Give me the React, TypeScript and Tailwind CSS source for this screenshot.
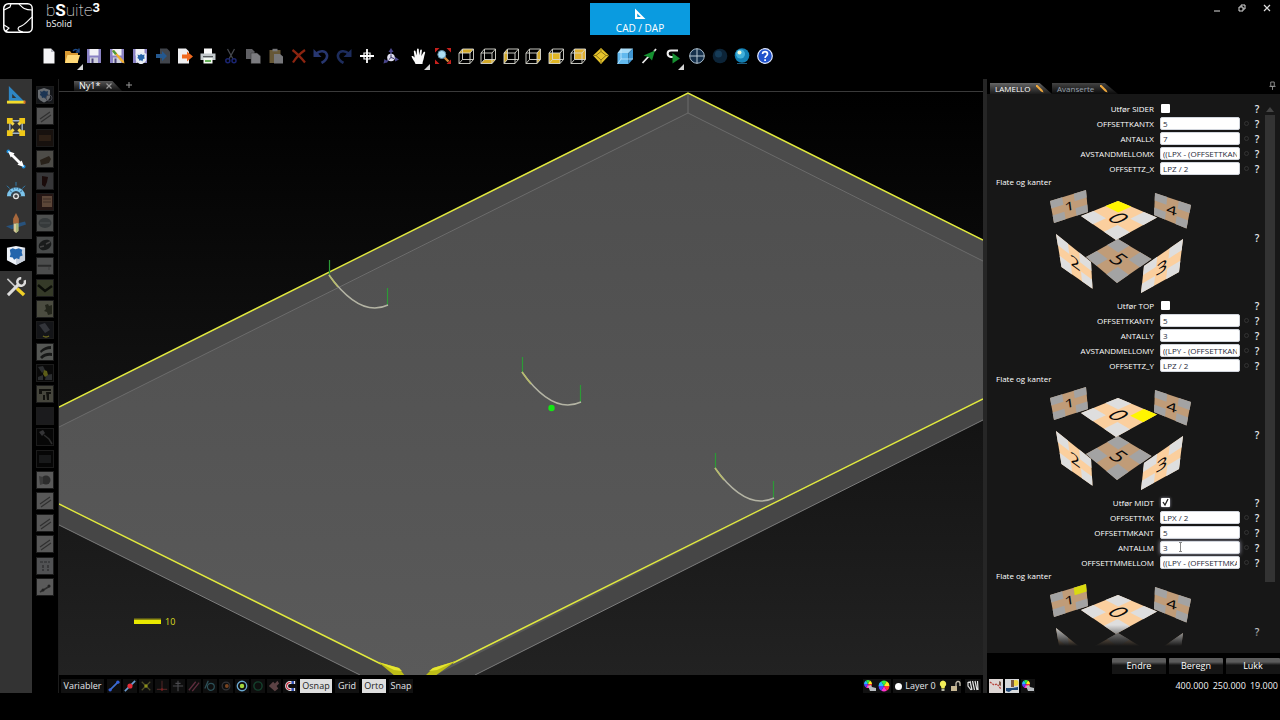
import React, { useState } from "react";

type IconName = string;

function cube(face: React.ReactNode) {
  return (
    <>
      {face}
      <path d="M1 5h11v10.500H1zM4.500 1H15.500v10.500H4.500zM1 5l3.500-4M12 5l3.500-4M12 15.500l3.500-4M1 15.500l3.500-4" fill="none" stroke="#d8d8d0" strokeWidth="0.9" />
    </>
  );
}

const floppy = (
  <>
    <path d="M1 1h14v14H1z" fill="#8a82c4" />
    <path d="M3.500 1h9v6.500h-9z" fill="#f2f2f6" />
    <path d="M4 9.500h8V15H4z" fill="#cfd0dc" />
    <path d="M5.500 10.500h2V15h-2z" fill="#4a4478" />
  </>
);

const shield = (
  <>
    <path d="M2 3l6-2 6 2v7c0 2-3 4-6 5.500C5 14 2 12 2 10z" fill="#e8edf4" />
    <path d="M4 4l2 .8L8 3.500l2 1 2-.4-.4 2.500.6 1.800-1.800.8L9.500 12 8 10.500 6 11 5.500 9 3.800 8l.8-1.800z" fill="#2763a8" />
  </>
);

const ICONS: Record<IconName, React.ReactNode> = {
  new: (
    <>
      <path d="M2.500 0.500h7.500l3.500 3.500v11.500h-11z" fill="#f4f4f6" />
      <path d="M10 .5V4h3.500z" fill="#b4b6c0" />
    </>
  ),
  open: (
    <>
      <path d="M1 3h5l1.500 2H14v10H1z" fill="#d99a32" />
      <path d="M3.500 7H16l-2.500 8H1z" fill="#ffd978" />
      <path d="M9 3c1.500-2 4-2 5.500 0M15 .5V4h-3.200" fill="none" stroke="#1f4a86" strokeWidth="1.400" />
    </>
  ),
  save: floppy,
  saveAs: (
    <>
      {floppy}
      <path d="M3 3l2-1 10 11 .5 2.500-2.500-1z" fill="#f0b030" />
      <path d="M3 3l2-1 3 3.500-2 1.500z" fill="#4a9a3c" />
    </>
  ),
  saveShield: (
    <>
      {floppy}
      <g transform="translate(2 3) scale(0.880)">{shield}</g>
    </>
  ),
  importDoc: (
    <>
      <path d="M5 .5h7l3 3v12H5z" fill="#41454c" />
      <path d="M1 6h6V3l5 5-5 5v-3H1z" fill="#24588f" />
    </>
  ),
  exportDoc: (
    <>
      <path d="M1 .5h8l3 3v12H1z" fill="#f0f0f2" />
      <path d="M5 6.500h5V3.500l6 5-6 5v-3H5z" fill="#f06a20" />
    </>
  ),
  print: (
    <>
      <path d="M4 .5h8V6H4z" fill="#fafafa" />
      <path d="M.5 5.500h15v6.500H.5z" fill="#c3c9cc" />
      <path d="M3 8h10v1.200H3z" fill="#54595c" />
      <path d="M3.500 10h9v5.500h-9z" fill="#f4faf2" />
      <path d="M5 12h6v2H5z" fill="#69b45c" />
    </>
  ),
  cut: (
    <>
      <path d="M4.500 1l5.500 10M11.500 1L6 11" stroke="#45484e" strokeWidth="1.300" />
      <circle cx="4.800" cy="12.800" r="2" fill="none" stroke="#1a2470" strokeWidth="1.500" />
      <circle cx="11" cy="12.800" r="2" fill="none" stroke="#1a2470" strokeWidth="1.500" />
    </>
  ),
  copy: (
    <>
      <path d="M1 1h6l2.500 2.500V11H1z" fill="#606064" />
      <path d="M6 5h6l3.500 3v7.500H6z" fill="#7c7c80" stroke="#333" strokeWidth="0.500" />
    </>
  ),
  paste: (
    <>
      <path d="M1.500 2h11v13h-11z" fill="#665736" />
      <path d="M4.500 .8h5v2.500h-5z" fill="#77777a" />
      <path d="M6 6h6l3 2.500v7H6z" fill="#77777a" />
    </>
  ),
  del: <path d="M1.500 2c4 3 8 7 12.500 12.500M14 2C9 5.500 5 9.500 2 14.500" fill="none" stroke="#8c2410" strokeWidth="2.200" />,
  undo: (
    <>
      <path d="M3.500 5.500C7 2 13 2.500 14 7c.6 3.500-2 6-5.500 8" fill="none" stroke="#27366f" strokeWidth="2.600" />
      <path d="M.5 1v8h8z" fill="#27366f" />
    </>
  ),
  redo: (
    <>
      <path d="M12.500 5.500C9 2 3 2.500 2 7c-.6 3.500 2 6 5.500 8" fill="none" stroke="#1d2c5c" strokeWidth="2.600" />
      <path d="M15.500 1v8h-8z" fill="#1d2c5c" />
    </>
  ),
  target: (
    <>
      <path d="M8 1v14M1 8h14" stroke="#fff" strokeWidth="1.800" />
      <path d="M5 5h6v6H5z" fill="none" stroke="#fff" strokeWidth="1.200" />
    </>
  ),
  axes: (
    <>
      <path d="M8 9V3M8 9l6 2M8 9l-5 5" stroke="#4a468c" strokeWidth="1.500" />
      <path d="M8 0l2.500 4h-5zM16 11.500l-4 2v-4.500zM.5 15.500l1-4.500 3.500 3z" fill="#4a468c" />
      <circle cx="8" cy="9.500" r="3.800" fill="#e0dff0" />
      <path d="M8 9.500V6.500M8 9.500l3 1M8 9.500l-2.200 2.200" stroke="#333060" strokeWidth="1" />
    </>
  ),
  hand: (
    <path
      d="M4.500 16C3.500 13 1 10.500.5 8.500c.8-1 2-.3 3.200 1.200L2.800 3.500c0-1.300 1.500-1.400 1.800-.1l1 4L6 1.500C6.100.2 7.700.2 7.800 1.500l.3 5.700 1.100-5c.3-1.200 1.800-.9 1.700.4L10.300 8l2.200-3.700c.7-1 2-.4 1.600.8-.8 2.400-1 4.400-1.600 6.400-.4 1.500-1 2.500-1 4.500z"
      fill="#fafafa"
    />
  ),
  zoomAll: (
    <>
      <path d="M0 0h4.500L0 4.500zM16 0h-4.500L16 4.500zM0 16h4.500L0 11.500zM16 16h-4.500l4.500-4.500z" fill="#c8201c" />
      <path d="M9 9l4.500 4.500" stroke="#d08a3c" strokeWidth="2.400" />
      <circle cx="6.800" cy="6.500" r="4" fill="#aee0f4" stroke="#5f8ea8" strokeWidth="1" />
    </>
  ),
  cTop: cube(<path d="M1 5l3.500-4h11L12 5z" fill="#d3a928" />),
  cBottom: cube(<path d="M1 15.500l3.500-4h11l-3.500 4z" fill="#d3a928" />),
  cLeft: cube(<path d="M1 5l3.500-4v10.500l-3.500 4z" fill="#d3a928" />),
  cRight: cube(<path d="M12 5l3.500-4v10.500l-3.500 4z" fill="#d3a928" />),
  cFront: cube(<path d="M1 5h11v10.500H1z" fill="#e0b624" />),
  cBack: cube(<path d="M4.500 1h11v10.500h-11z" fill="#e0b030" />),
  iso: (
    <>
      <path d="M8 0l8 7.500L8 16 0 7.500z" fill="#e6c42c" />
      <path d="M8 3.500l5 4-5 4.500-5-4.500zM8 3.500V0M13 7.500h3M8 12v4M3 7.500H0" fill="none" stroke="#8c7414" strokeWidth="1" />
    </>
  ),
  cubeBlue: (
    <>
      <path d="M.5 5h11v11H.5z" fill="#62b9ee" />
      <path d="M.5 5L4 .5h12L11.500 5z" fill="#a8dcf8" />
      <path d="M11.500 5L16 .5V11l-4.500 5z" fill="#3f96d2" />
      <path d="M4 .5V11h12M4 11L.5 16" fill="none" stroke="#d6f0ff" strokeWidth="0.700" />
    </>
  ),
  arrowGreen: (
    <>
      <path d="M1.500 15L8 8M13 3.500l2-2.500" stroke="#e8e8e8" strokeWidth="1.800" />
      <path d="M14 2.500l-3 10-3-3.300L2.500 7.500z" fill="#159030" />
    </>
  ),
  turn: (
    <>
      <path d="M13 2.500H6C1.500 2.500 1.500 8.500 6 9h2" fill="none" stroke="#f0f0f0" strokeWidth="2" />
      <path d="M7.500 5l7.500 5.500-7.500 5z" fill="#159030" />
    </>
  ),
  globeWire: (
    <>
      <circle cx="8" cy="8" r="7.300" fill="#15304c" stroke="#a8bccc" strokeWidth="1" />
      <path d="M8 .5v15M.5 8h15" stroke="#b8c8d4" strokeWidth="1" />
    </>
  ),
  globeDark: (
    <>
      <circle cx="8" cy="8" r="7.300" fill="#0c2438" />
      <circle cx="6.500" cy="6" r="3.500" fill="#163c58" />
    </>
  ),
  globe: (
    <>
      <circle cx="8" cy="7.500" r="7.300" fill="#1380b4" />
      <circle cx="6.500" cy="6" r="4.500" fill="#40b0dc" />
      <circle cx="5.500" cy="4.500" r="2" fill="#eef8d8" />
      <path d="M3 15.500h10" stroke="#1d5a7c" />
    </>
  ),
  help: (
    <>
      <circle cx="8" cy="8" r="7.300" fill="#2052cc" stroke="#dfe8ff" strokeWidth="1.200" />
      <path d="M5.500 6c0-3.300 5-3.300 5 0 0 2-2.400 1.800-2.400 4M8.100 11.300v1.800" fill="none" stroke="#fff" strokeWidth="1.700" />
    </>
  ),
};

function Ico({ name }: { name: IconName }) {
  return (
    <svg viewBox="0 0 16 16" className="size-4" aria-hidden="true">
      {ICONS[name]}
    </svg>
  );
}

function ToolButton({ name, menu }: { name: IconName; menu?: boolean }) {
  return (
    <button type="button" aria-label={name} className="relative flex h-6 w-5 items-center justify-center">
      <Ico name={name} />
      {menu && (
        <svg viewBox="0 0 6 6" className="absolute -right-px -bottom-0.5 size-[6px]" aria-hidden="true">
          <path d="M6 0v6H0z" fill="#d4d4d4" />
        </svg>
      )}
    </button>
  );
}

const MENUS = ["open", "hand", "turn"];

function ToolGroup({ names, width }: { names: IconName[]; width: string }) {
  return (
    <div className={`flex shrink-0 justify-between ${width}`}>
      {names.map((n) => (
        <ToolButton key={n} name={n} menu={MENUS.includes(n)} />
      ))}
    </div>
  );
}

const LEFT_TOOLS: { label: string; art: React.ReactNode }[] = [
  {
    label: "Draw",
    art: (
      <>
        <path d="M3 1v16h16zM6.500 9.500v4.200h4.300z" fill="#2e86c4" fillRule="evenodd" />
        <path d="M1 16.500h19v3H1z" fill="#f4dc2c" />
        <path d="M18.500 16.500h2v3h-2z" fill="#d86c28" />
      </>
    ),
  },
  {
    label: "Edit points",
    art: (
      <>
        <path d="M4 4h13v13H4z" fill="none" stroke="#9fb4cc" strokeWidth="1.500" />
        <path d="M1 1h6v6H1zM14 1h6v6h-6zM1 14h6v6H1zM14 14h6v6h-6z" fill="#f0c818" />
        <path d="M6 6l2 2M15 6l-2 2M6 15l2-2M15 15l-2-2" stroke="#f4d84c" strokeWidth="3" />
      </>
    ),
  },
  {
    label: "Measure",
    art: (
      <>
        <circle cx="2.500" cy="2.500" r="2" fill="#1d8cd8" />
        <circle cx="18.500" cy="18.500" r="2" fill="#1d8cd8" />
        <path d="M5 5l11 11" stroke="#fff" strokeWidth="3" />
        <path d="M2 2l7 2.500L5 9zM19 19l-7-2.500 4.500-4.500z" fill="#fff" />
      </>
    ),
  },
  {
    label: "Angle",
    art: (
      <>
        <path d="M1 16a9.500 9.500 0 0119 0z" fill="#7cc4ec" />
        <path d="M5 16a5.500 5.500 0 0111 0z" fill="#35444e" />
        <path d="M4 10l2 1.500M7 7l1 2M10.500 6v2M14 7l-1 2M17 10l-2 1.500" stroke="#28567a" />
        <path d="M10.500 1v4M1 5l3 3M20 5l-3 3" stroke="#2f7fb4" />
        <circle cx="10.500" cy="16" r="2.500" fill="#444" stroke="#e8e8e8" strokeWidth="1.300" />
      </>
    ),
  },
  {
    label: "Tools",
    art: (
      <>
        <path d="M0 14l20-5 1 3-15 5z" fill="#28527c" />
        <path d="M10.500 0l3 6v5h-6V6z" fill="#a8683c" />
        <path d="M8 11h5v8l-2.500 2L8 19z" fill="#d8c898" />
        <path d="M10.500 11h2.500v8l-2.500 2z" fill="#a8b878" />
      </>
    ),
  },
  {
    label: "Macros",
    art: (
      <>
        <path d="M1 3l9.500-2L20 3v13l-9.500 5L1 16z" fill="#eef2f8" />
        <path d="M10.500 8L20 3v13l-9.500 5z" fill="#c8d0dc" />
        <path d="M4 5l3-1.500 3 1 3.500-1L17 5l-.5 3 1 3-3 1-.5 3-3-1-2.500 1.500L7 13l-3-.5.800-3z" fill="#2365ac" />
      </>
    ),
  },
  {
    label: "Settings",
    art: (
      <>
        <path d="M1.500 2L12 12.500" stroke="#c8c8c8" strokeWidth="1.600" />
        <path d="M11.500 12l7.500 7" stroke="#f0d028" strokeWidth="3.600" />
        <path d="M2 19L14 7" stroke="#dcdcdc" strokeWidth="3.200" />
        <path d="M19.500 3.500A4 4 0 1116 1.200" fill="none" stroke="#dcdcdc" strokeWidth="2.600" />
      </>
    ),
  },
];

const pencilMarks = <path d="M3 11L13 4M4 14L14 7" stroke="#303030" strokeWidth="1.200" />;

const MACROS: { bg: string; art: React.ReactNode }[] = [
  { bg: "#15171a", art: <g opacity="0.400"><g transform="translate(-1 0)">{shield}</g><circle cx="12" cy="11" r="3" fill="none" stroke="#889" /></g> },
  { bg: "#545454", art: pencilMarks },
  { bg: "#17110e", art: <path d="M2 5h12v6H2z" fill="#2c1f15" /> },
  { bg: "#4d4c48", art: <path d="M3 9l9-4 2 3-2 4-8 2z" fill="#29221a" /> },
  { bg: "#363638", art: <path d="M5 3l6 1-1 5-2 5-3-2z" fill="#1a0b0a" /> },
  { bg: "#241614", art: <><path d="M5 2h10v11H5z" fill="#5c4638" /><path d="M6 5h8M6 8h8" stroke="#3c2c24" /></> },
  { bg: "#4e504f", art: <><ellipse cx="8" cy="8" rx="6.500" ry="5" fill="#363a3b" /><path d="M3 8h10" stroke="#4b4f50" /></> },
  { bg: "#484a4a", art: <><ellipse cx="8" cy="8" rx="6.500" ry="5" transform="rotate(-25 8 8)" fill="#191b1b" /><path d="M3 10l4-1M9 7l4-2" stroke="#444" strokeWidth="1.500" /></> },
  { bg: "#4c4d4d", art: <path d="M1 7h13v1.500H1zM12 9v3" fill="#2a2b2b" stroke="#2a2b2b" strokeWidth="0.500" /> },
  { bg: "#353a28", art: <path d="M1 5l7 6 7-5" fill="none" stroke="#0b0d08" strokeWidth="2.500" /> },
  { bg: "#4b4c40", art: <path d="M8 4l3-1 1 2 3-1v9l-4 1-1-3-3-1 2-2z" fill="#23251b" /> },
  { bg: "#141518", art: <><path d="M2 3l6-2 5 7-5 3z" fill="#33353a" /><path d="M6 14q3 2 6 0" stroke="#6e6a20" strokeWidth="1.500" fill="none" /></> },
  { bg: "#555754", art: <path d="M3 7q5-5 11-5v3Q8 5 4 9zM3 13q5-5 12-4v3q-6-1-10 3z" fill="#171817" /> },
  { bg: "#0a0a0a", art: <><path d="M1 2l5-1 2 4-3 3zM9 10l6-1v6H8zM1 12l5-2v5H1z" fill="#2c2e30" /><path d="M7 5l3 1 1 4-3 2-2-3z" fill="#5c5d18" /></> },
  { bg: "#45453c", art: <path d="M2 3h12v2H5v3H2zM9 6h5v2h-2v6h-2zM6 9h2v5H6z" fill="#11110e" /> },
  { bg: "#1b1b1d", art: null },
  { bg: "#070707", art: <><path d="M2 3l4-2 2 3-3 3z" fill="#343436" /><path d="M7 6l5 4 3 5" stroke="#2d2d2d" strokeWidth="1.500" fill="none" /></> },
  { bg: "#060606", art: <path d="M2 4h12v8H2z" fill="#18191a" /> },
  { bg: "#5a5a5a", art: <><circle cx="9" cy="8" r="4.500" fill="#2c2c2c" /><path d="M2 4l4 1v7l-3 1z" fill="#3b3b3b" /></> },
  { bg: "#585858", art: pencilMarks },
  { bg: "#585858", art: pencilMarks },
  { bg: "#585858", art: pencilMarks },
  { bg: "#515254", art: <path d="M3 4h10M6 7v6M11 7v6" stroke="#2a2a2c" strokeWidth="1.200" strokeDasharray="3 1" /> },
  { bg: "#5a5a5a", art: <><path d="M3 13l10-6" stroke="#2c2c2c" strokeWidth="1.500" /><circle cx="6" cy="11" r="1.500" fill="#222" /><circle cx="12" cy="7" r="1.500" fill="#222" /></> },
];

function Viewport() {
  const arcs = [
    [329, 275],
    [522, 372],
    [715, 468],
  ];
  return (
    <svg viewBox="59 92 924 583" preserveAspectRatio="xMidYMid slice" className="min-h-0 w-full flex-1" role="img" aria-label="3D view">
      <defs>
        <linearGradient id="bg" x1="0" y1="0" x2="0" y2="1">
          <stop offset="0" stopColor="#000" />
          <stop offset="1" stopColor="#222" />
        </linearGradient>
        <linearGradient id="top" x1="0" y1="0" x2="0" y2="1">
          <stop offset="0" stopColor="#4d4d4d" />
          <stop offset="1" stopColor="#5a5a5a" />
        </linearGradient>
      </defs>
      <path d="M59 92h924v583H59z" fill="url(#bg)" />
      <path d="M59 504L410 677H430L983 399V420L475 675H360L59 525z" fill="#464646" />
      <path d="M59 407L688 93l295 147v159L430 678h-20L59 504z" fill="url(#top)" />
      <path d="M59 407L688 93l295 147v21L688 113 59 427z" fill="#4b4b4b" />
      <path d="M59 427L688 113l295 148M688 93v20" fill="none" stroke="#747474" strokeWidth="0.800" />
      <path d="M59 525l301 150M475 675l508-255" fill="none" stroke="#858585" strokeWidth="0.900" />
      <path d="M59 407L688 93l295 147M59 504l322 160M453 663l530-264" fill="none" stroke="#e2ea3e" strokeWidth="1.400" />
      <path d="M378 662l21 6 6 8h-10zM456 661l-23 7-8 8h10z" fill="#bcbc18" />
      <path d="M378 662l21 6 3 3-8-1zM456 661l-23 7-4 3 8-1z" fill="#e6e630" />
      {arcs.map(([x, y]) => (
        <g key={x} fill="none">
          <path d={`M${x + 0.5} ${y - 15}v16M${x + 58.500} ${y + 13}v18`} stroke="#2c9a36" strokeWidth="1.200" />
          <path d={`M${x} ${y}q31 43 59 30`} stroke="#b4b4a4" strokeWidth="1.400" />
          <path d={`M${x} ${y}q4 6 9 12`} stroke="#b8bc6c" strokeWidth="1.400" />
        </g>
      ))}
      <circle cx="551.500" cy="408" r="3.200" fill="#14e614" />
      <path d="M134 619h27v5h-27z" fill="#e8e800" />
      <path d="M134 618.500h27v1.500h-27z" fill="#8c8a10" />
      <text x="165" y="625" fontSize="9" fill="#dcdc20" fontFamily="Open Sans, sans-serif">
        10
      </text>
    </svg>
  );
}

type Pt = [number, number];

const FACES: { id: string; quad: [Pt, Pt, Pt, Pt]; dim: boolean; turn: number }[] = [
  { id: "5", quad: [[46, 77], [78, 59], [111.5, 79], [77, 103]], dim: true, turn: 1 },
  { id: "1", quad: [[10, 21], [46, 10], [48, 32], [14, 43]], dim: true, turn: 0 },
  { id: "4", quad: [[115, 13], [151, 25], [146.5, 48.500], [114, 35]], dim: true, turn: 0 },
  { id: "0", quad: [[41, 36], [78, 21], [117, 37.500], [76, 60]], dim: false, turn: 1 },
  { id: "2", quad: [[16, 54], [51, 82], [52.500, 108.700], [21.500, 87]], dim: false, turn: 0 },
  { id: "3", quad: [[104, 86], [143, 59], [139, 92], [101, 113]], dim: false, turn: 0 },
];

function at(q: [Pt, Pt, Pt, Pt], u: number, v: number): Pt {
  const mix = (i: 0 | 1) =>
    q[0][i] * (1 - u) * (1 - v) + q[1][i] * u * (1 - v) + q[2][i] * u * v + q[3][i] * (1 - u) * v;
  return [mix(0), mix(1)];
}

const CUTS = [0, 0.34, 0.66, 1];
const CORNERS = [
  [0, 0],
  [0, 2],
  [2, 0],
  [2, 2],
];

function Faces({ mark }: { mark: string }) {
  return (
    <svg viewBox="0 8 160 110" className="h-[110px] w-40" role="img" aria-label="Flate og kanter">
      {FACES.map(({ id, quad, dim, turn }) => {
        const a = at(quad, 0, 0.5);
        const b = at(quad, 1, 0.5);
        const c = at(quad, 0.5, 0);
        const d = at(quad, 0.5, 1);
        const k = 34;
        let u: Pt = [(b[0] - a[0]) / k, (b[1] - a[1]) / k];
        let v: Pt = [(d[0] - c[0]) / k, (d[1] - c[1]) / k];
        if (turn) [u, v] = [v, [-u[0], -u[1]]];
        const m = at(quad, 0.5, 0.5);
        return (
          <g key={id}>
            <polygon points={quad.map((p) => p.join(",")).join(" ")} fill={dim ? "#c09c78" : "#fbcf9e"} />
            {CORNERS.map(([r, s]) => {
              const on = mark === `${id}${r}${s}`;
              const pts = [
                at(quad, CUTS[s], CUTS[r]),
                at(quad, CUTS[s + 1], CUTS[r]),
                at(quad, CUTS[s + 1], CUTS[r + 1]),
                at(quad, CUTS[s], CUTS[r + 1]),
              ];
              const fill = on ? (dim ? "#dada10" : "#fff600") : dim ? "#a3a3a3" : "#dedede";
              return <polygon key={`${r}${s}`} points={pts.map((p) => p.join(",")).join(" ")} fill={fill} />;
            })}
            <text
              transform={`matrix(${u[0]} ${u[1]} ${v[0]} ${v[1]} ${m[0]} ${m[1]})`}
              y="6"
              textAnchor="middle"
              fontSize="18"
              fill="#0a0a0a"
              fontFamily="Open Sans, sans-serif"
            >
              {id}
            </text>
          </g>
        );
      })}
    </svg>
  );
}

const GROUPS = [
  {
    check: "Utfør SIDER",
    on: false,
    mark: "002",
    fields: [
      ["OFFSETTKANTX", "5"],
      ["ANTALLX", "7"],
      ["AVSTANDMELLOMX", "((LPX - (OFFSETTKANTX * 2)) / 6)"],
      ["OFFSETTZ_X", "LPZ / 2"],
    ],
  },
  {
    check: "Utfør TOP",
    on: false,
    mark: "022",
    fields: [
      ["OFFSETTKANTY", "5"],
      ["ANTALLY", "3"],
      ["AVSTANDMELLOMY", "((LPY - (OFFSETTKANTY * 2)) / 2)"],
      ["OFFSETTZ_Y", "LPZ / 2"],
    ],
  },
  {
    check: "Utfør MIDT",
    on: true,
    mark: "102",
    fields: [
      ["OFFSETTMX", "LPX / 2"],
      ["OFFSETTMKANT", "5"],
      ["ANTALLM", "3"],
      ["OFFSETTMMELLOM", "((LPY - (OFFSETTMKANT * 2)) / 2)"],
    ],
  },
];

function Help() {
  return (
    <button type="button" className="w-2 text-center text-[10px] leading-3 font-semibold text-gray-200">
      ?
    </button>
  );
}

function Group({ g }: { g: (typeof GROUPS)[number] }) {
  const [on, setOn] = useState(g.on);
  return (
    <section className="flex h-[197px] shrink-0 flex-col">
      <div className="flex h-[15px] shrink-0 items-center">
        <label htmlFor={g.check} className="flex-1 pr-[7px] text-right">
          {g.check}
        </label>
        <div className="flex w-[92px] items-center">
          <span className="relative flex size-[9px]">
            <input
              id={g.check}
              type="checkbox"
              checked={on}
              onChange={() => setOn(!on)}
              className="size-[9px] appearance-none rounded-[1px] bg-white checked:shadow-[0_0_3px_#99a]"
            />
            {on && (
              <svg viewBox="0 0 9 9" className="pointer-events-none absolute inset-0 size-[9px]" aria-hidden="true">
                <path d="M2 4l2 3 3-6" fill="none" stroke="#222" strokeWidth="1.300" />
              </svg>
            )}
          </span>
        </div>
        <Help />
      </div>
      {g.fields.map(([label, value]) => (
        <div key={label} className="flex h-[15px] shrink-0 items-center">
          <label htmlFor={label} className="flex-1 pr-[6px] text-right">
            {label}
          </label>
          <div className="relative flex w-[93px] items-center gap-1">
            <input
              id={label}
              defaultValue={value}
              className={`h-[13px] w-20 rounded-[2px] border border-gray-300 bg-white px-[2px] text-[8px] leading-[11px] text-gray-800 outline-none ${label === "ANTALLM" ? "shadow-[0_0_4px_#99a]" : ""}`}
            />
            <span className="size-[5px] rounded-full border border-[#333]" />
            {label === "ANTALLM" && (
              <svg viewBox="0 0 5 10" className="pointer-events-none absolute top-px left-[18px] h-[10px] w-[5px]" aria-hidden="true">
                <path d="M1 .5h3M2.500 .5v9M1 9.500h3" stroke="#888" />
              </svg>
            )}
          </div>
          <Help />
        </div>
      ))}
      <h3 className="h-3 shrink-0 pl-[9px] leading-3">Flate og kanter</h3>
      <div className="flex items-start justify-end">
        <Faces mark={g.mark} />
        <div className="flex w-[61px] justify-end pt-11">
          <Help />
        </div>
      </div>
    </section>
  );
}

function Pencil() {
  return (
    <svg viewBox="0 0 8 8" className="size-2" aria-hidden="true">
      <path d="M0 0h1.500l5 5 1 2.500-2.500-1-5-5z" fill="#f0a83c" />
    </svg>
  );
}

function SidePanel() {
  return (
    <aside className="flex w-[297px] shrink-0 flex-col border-l-4 border-[#262626]">
      <div className="flex h-[15px] shrink-0 items-end pl-[3px]">
        <button type="button" className="flex h-[11px] w-[62px] items-center gap-[6px] bg-linear-to-b from-[#666] to-[#1c1c1c] pl-[5px] text-[8px] leading-[11px] text-white [clip-path:polygon(0_0,80%_0,100%_100%,0_100%)]">
          LAMELLO
          <Pencil />
        </button>
        <button type="button" className="flex h-[11px] w-[66px] items-center gap-[6px] bg-linear-to-b from-[#444] to-[#0c0c0c] pl-[5px] text-[8px] leading-[11px] text-gray-400 [clip-path:polygon(0_0,80%_0,100%_100%,0_100%)]">
          Avanserte
          <Pencil />
        </button>
        <span className="flex-1" />
        <button type="button" aria-label="Pin" className="mr-1 mb-1">
          <svg viewBox="0 0 8 10" className="h-[9px] w-[7px]">
            <path d="M2 1h4v5H2zM.5 6h7M4 6v4" fill="none" stroke="#999" />
          </svg>
        </button>
      </div>
      <div className="relative flex min-h-0 flex-1 overflow-hidden bg-[#171717]">
        <div className="flex w-[274px] flex-col pt-[7px] text-[8px] leading-3 text-white">
          {GROUPS.map((g) => (
            <Group key={g.check} g={g} />
          ))}
        </div>
        <div className="ml-1 flex w-[10px] flex-col items-center pt-[13px] pb-4">
          <svg viewBox="0 0 10 5" className="h-[5px] w-[10px]" aria-hidden="true">
            <path d="M5 0l4 5H1z" fill="#444" />
          </svg>
          <div className="mt-[3px] h-[467px] w-[10px] shrink bg-[#333]" />
        </div>
        <div className="pointer-events-none absolute inset-x-0 bottom-0 h-7 bg-linear-to-t from-[#171717] from-25% to-transparent" />
      </div>
      <div className="flex h-[23px] shrink-0 items-end justify-end gap-[3px] pb-[2px]">
        {["Endre", "Beregn", "Lukk"].map((t) => (
          <button key={t} type="button" className="h-4 w-[54px] rounded-t-[1px] bg-linear-to-b from-[#5c5c5c] from-25% to-[#151515] to-45% text-[9px] leading-4 text-white">
            {t}
          </button>
        ))}
      </div>
      <div className="flex h-[17px] shrink-0 items-end gap-[2px] pl-[2px]">
        <button type="button" aria-label="Path" className="size-[14px] bg-[#ddd6d4]">
          <svg viewBox="0 0 14 14">
            <path d="M1 3l4 3 3-1 4 5" stroke="#b8423a" strokeDasharray="2 1" fill="none" strokeWidth="1.300" />
            <path d="M10 2l2 1v4l-2-1z" fill="#7a5a48" />
          </svg>
        </button>
        <button type="button" aria-label="Piece" className="size-[14px] bg-[#d8dadc]">
          <svg viewBox="0 0 14 14">
            <circle cx="10.500" cy="4" r="3" fill="#f0d840" />
            <path d="M6 1h3v7H6z" fill="#7c5a40" />
            <path d="M1 9l6 0 6-1v3l-6 0-3 2-3-1z" fill="#1f4878" />
          </svg>
        </button>
        <button type="button" aria-label="Colors" className="size-[14px] bg-[#111]">
          <Wheel tail />
        </button>
        <div className="flex flex-1 justify-end gap-1 pr-[2px] text-[9px] leading-[14px] text-gray-100">
          <span>400.000</span>
          <span>250.000</span>
          <span>19.000</span>
        </div>
      </div>
    </aside>
  );
}

function Wheel({ tail }: { tail?: boolean }) {
  const cols = ["#f33", "#f3c", "#54f", "#2bf", "#3e4", "#fe2"];
  const r = tail ? 4 : 5.5;
  const cx = tail ? 5 : 7;
  const cy = tail ? 5 : 7;
  return (
    <svg viewBox="0 0 14 14" className="size-[14px]" aria-hidden="true">
      {cols.map((c, i) => {
        const a = (i * Math.PI) / 3;
        const b = ((i + 1) * Math.PI) / 3;
        return <path key={c} d={`M${cx} ${cy}L${cx + r * Math.cos(a)} ${cy + r * Math.sin(a)}A${r} ${r} 0 0 1 ${cx + r * Math.cos(b)} ${cy + r * Math.sin(b)}z`} fill={c} />;
      })}
      {tail && <path d="M5 7l3-1 1 2 4 1v3H7z" fill="#b8bcc0" />}
    </svg>
  );
}

const SNAPS: { label: string; art: React.ReactNode }[] = [
  { label: "Endpoint", art: <><path d="M3 11l8-8" stroke="#3f6fd0" strokeWidth="2" /><circle cx="2.500" cy="11.500" r="2" fill="#3460d8" /><circle cx="11.500" cy="2.500" r="2" fill="#3460d8" /></> },
  { label: "Midpoint", art: <><path d="M1 13L13 1" stroke="#6c9cd0" strokeWidth="2" /><circle cx="7" cy="7" r="3" fill="#e42c38" /></> },
  { label: "Intersection", art: <><path d="M2 2l10 10M12 2L2 12" stroke="#4c4c28" strokeWidth="1.400" /><circle cx="7" cy="7" r="2" fill="#8c9018" /></> },
  { label: "Perpendicular", art: <><path d="M7 1v10M1 11h12" stroke="#4c2424" strokeWidth="1.300" /><circle cx="7" cy="11" r="1.500" fill="#7a2020" /></> },
  { label: "Center line", art: <path d="M7 1v12M1 7h12M4 4h6" stroke="#4a4a4e" strokeWidth="1.300" /> },
  { label: "Parallel", art: <path d="M1 12L9 2M5 13l8-10" stroke="#5c2c3c" strokeWidth="1.600" /> },
  { label: "Tangent", art: <><circle cx="8" cy="8" r="4" fill="none" stroke="#2c5058" strokeWidth="1.400" /><path d="M1 10L5 1" stroke="#2c5058" strokeWidth="1.500" /></> },
  { label: "Quadrant", art: <><circle cx="7" cy="7" r="4.500" fill="none" stroke="#343438" strokeWidth="1.400" /><circle cx="8" cy="7" r="2.200" fill="#7a4420" /></> },
  { label: "Center", art: <><circle cx="7" cy="7" r="5.500" fill="none" stroke="#6aa8d0" strokeWidth="1.600" /><circle cx="7" cy="7" r="2.600" fill="#a4d83c" /></> },
  { label: "Circle", art: <circle cx="7" cy="7" r="4.800" fill="none" stroke="#14402c" strokeWidth="1.700" /> },
  { label: "Surface", art: <path d="M1 7l5-5 2 2 3-3 2 3-3 3 2 3-4 3z" fill="#5c4244" /> },
  { label: "Magnet", art: <><path d="M9 3H7a4 4 0 000 8h2" fill="none" stroke="#e8eaf0" strokeWidth="3.400" /><path d="M7.500 3H7a4 4 0 000 8h.5" fill="none" stroke="#c82030" strokeWidth="1.200" /><path d="M9 3h2.500M9 11h2.500" stroke="#2c50c0" strokeWidth="3.400" /><path d="M11.500 3H13M11.500 11H13" stroke="#e8eaf0" strokeWidth="3.400" /></> },
];

function StatusBar() {
  const [active, setActive] = useState<string[]>(["Osnap", "Orto"]);
  const toggle = (t: string) => setActive((s) => (s.includes(t) ? s.filter((x) => x !== t) : [...s, t]));
  return (
    <div className="flex h-[18px] shrink-0 items-end bg-black pl-[2px] text-[9px] leading-[14px] text-gray-200">
      <button type="button" className="h-[14px] w-[43px] bg-[#111]">
        Variabler
      </button>
      <div className="ml-[3px] flex gap-[2px]">
        {SNAPS.map((s) => (
          <button key={s.label} type="button" aria-label={s.label} className="flex size-[14px] items-center justify-center bg-[#0e0e0e]">
            <svg viewBox="0 0 14 14" className="size-3">
              {s.art}
            </svg>
          </button>
        ))}
      </div>
      <div className="ml-[3px] flex gap-[3px]">
        {["Osnap", "Grid", "Orto", "Snap"].map((t) => (
          <button
            key={t}
            type="button"
            aria-pressed={active.includes(t)}
            onClick={() => toggle(t)}
            className={`h-[14px] shrink-0 ${t === "Osnap" ? "w-8" : "w-6"} ${active.includes(t) ? "bg-[#dedede] text-[#222]" : "bg-[#111]"}`}
          >
            {t}
          </button>
        ))}
      </div>
      <div className="flex flex-1 items-center justify-end pr-[2px]">
        <button type="button" aria-label="Layer colors" className="bg-[#111]">
          <Wheel tail />
        </button>
        <button type="button" aria-label="Color wheel" className="bg-[#111]">
          <Wheel />
        </button>
        <button type="button" className="ml-[2px] flex h-[14px] w-[68px] items-center justify-between bg-[#111] pl-[2px]">
          <span className="size-[7px] rounded-full bg-white" />
          <span>Layer 0</span>
          <svg viewBox="0 0 8 12" className="h-3 w-2" aria-hidden="true">
            <path d="M4 .5a3.400 3.400 0 012 6L5.500 8.500h-3L2 6.500a3.400 3.400 0 012-6z" fill="#f4ee58" />
            <path d="M2.500 9h3v2h-3z" fill="#b8b8a8" />
          </svg>
          <svg viewBox="0 0 11 12" className="h-3 w-[11px]" aria-hidden="true">
            <path d="M1 6h6v5H1z" fill="#c8b894" />
            <path d="M6 6V3.500a2 2 0 014 0V6" fill="none" stroke="#c8c0b0" strokeWidth="1.300" />
          </svg>
        </button>
        <button type="button" aria-label="Hatch" className="ml-1 bg-[#111]">
          <svg viewBox="0 0 16 14" className="h-[14px] w-4">
            <path d="M5 2l2 9M7.500 2l2 9M10 2l2 9M12.500 2l.5 9M3 3l3 1M3 3v4l3 4" fill="none" stroke="#e4e4e4" strokeWidth="1.200" />
          </svg>
        </button>
      </div>
    </div>
  );
}

export default function App() {
  return (
    <div className="flex h-screen min-h-0 flex-col overflow-hidden bg-black pb-[27px] font-['Open_Sans',sans-serif] text-gray-100">
      <header className="grid h-9 shrink-0 grid-cols-[1fr_auto_1fr] items-start">
        <div className="flex gap-[13px] pl-[3px]">
          <svg viewBox="0 0 30 30" className="mt-[3px] size-[30px]" aria-hidden="true">
            <rect x="0.800" y="0.800" width="28.400" height="28.400" rx="4.500" fill="none" stroke="#fff" strokeWidth="1.500" />
            <path d="M1 7l6-3 1-3M16 1c3 3 5 6 13 6M29 14c-4 3-6 8-13 10-2 2-1 4 4 5M1 22l5 3-4 4" fill="none" stroke="#fff" strokeWidth="1.100" />
          </svg>
          <div className="flex flex-col">
            <h1 className="flex h-[19px] font-[Roboto,sans-serif] text-[17px] leading-[21px] font-thin text-white">
              <span>b</span>
              <b className="font-bold">S</b>
              <span>uite</span>
              <b className="text-[13px] leading-4 font-bold">3</b>
            </h1>
            <span className="text-[9px] leading-[10px]">bSolid</span>
          </div>
        </div>
        <button type="button" className="mt-[3px] flex h-8 w-[100px] flex-col items-center justify-end bg-[#0a9be0] text-[10px] leading-[13px] text-white">
          <svg viewBox="0 0 12 12" className="mb-[2px] size-3" aria-hidden="true">
            <path d="M1 .5V11h10.500zM3.200 5.500v3.400h3.600z" fill="#fff" fillRule="evenodd" />
          </svg>
          CAD / DAP
        </button>
        <div className="flex justify-end gap-[15px] pt-[3px] pr-2">
          <button type="button" aria-label="Minimize">
            <svg viewBox="0 0 10 10" className="size-[10px]"><path d="M2 8h6" stroke="#ddd" /></svg>
          </button>
          <button type="button" aria-label="Restore">
            <svg viewBox="0 0 10 10" className="size-[10px]"><path d="M2 4h4v4H2zM4 4V2h4v4H6" fill="none" stroke="#ddd" /></svg>
          </button>
          <button type="button" aria-label="Close">
            <svg viewBox="0 0 10 10" className="size-[10px]"><path d="M2 2l6 6M8 2L2 8" stroke="#ddd" strokeWidth="1.200" /></svg>
          </button>
        </div>
      </header>
      <div className="flex h-[43px] shrink-0 gap-1 pt-2 pl-[39px]">
        <ToolGroup width="w-[338px]" names={["new", "open", "save", "saveAs", "saveShield", "importDoc", "exportDoc", "print", "cut", "copy", "paste", "del", "undo", "redo", "target"]} />
        <ToolGroup width="w-[48px]" names={["axes", "hand"]} />
        <ToolGroup width="w-[178px]" names={["zoomAll", "cTop", "cBottom", "cLeft", "cRight", "cFront", "cBack", "iso"]} />
        <ToolGroup width="w-[68px]" names={["cubeBlue", "arrowGreen", "turn"]} />
        <ToolGroup width="w-[88px]" names={["globeWire", "globeDark", "globe", "help"]} />
      </div>
      <div className="flex min-h-0 flex-1">
        <nav className="flex w-8 shrink-0 flex-col bg-[#333]">
          {LEFT_TOOLS.map((t) => (
            <button key={t.label} type="button" aria-label={t.label} className={`flex size-8 items-center justify-center ${t.label === "Macros" ? "bg-black" : ""}`}>
              <svg viewBox="0 0 21 21" className="size-5">
                {t.art}
              </svg>
            </button>
          ))}
        </nav>
        <div className="flex w-[27px] shrink-0 border-r border-[#1c1c1c]">
          <div className="flex h-[517px] flex-1 flex-col items-center justify-between pt-[7px]">
            {MACROS.map((m, i) => (
              <button key={i} type="button" aria-label={`Macro ${i + 1}`} className="size-[18px] shrink-0 border border-[#1c1c1c]">
                <svg viewBox="0 0 16 16" className="size-4">
                  <path d="M0 0h16v16H0z" fill={m.bg} />
                  {m.art}
                </svg>
              </button>
            ))}
          </div>
        </div>
        <main className="flex min-w-0 flex-1 flex-col">
          <div className="flex h-[13px] shrink-0 items-end gap-1 border-b border-[#3a3a3a] pl-[15px]">
            <button type="button" className="flex h-[10px] w-12 items-center gap-[6px] bg-linear-to-b from-[#555] to-[#111] pl-[5px] text-[9px] leading-[10px] text-white [clip-path:polygon(0_0,80%_0,100%_100%,0_100%)]">
              Ny1*
              <svg viewBox="0 0 6 6" className="size-[6px]" aria-hidden="true">
                <path d="M.5 .5l5 5M5.500 .5l-5 5" stroke="#999" strokeWidth="1.200" />
              </svg>
            </button>
            <button type="button" aria-label="New tab" className="mb-[3px]">
              <svg viewBox="0 0 6 6" className="size-[6px]"><path d="M3 0v6M0 3h6" stroke="#999" /></svg>
            </button>
          </div>
          <Viewport />
          <StatusBar />
        </main>
        <SidePanel />
      </div>
    </div>
  );
}
